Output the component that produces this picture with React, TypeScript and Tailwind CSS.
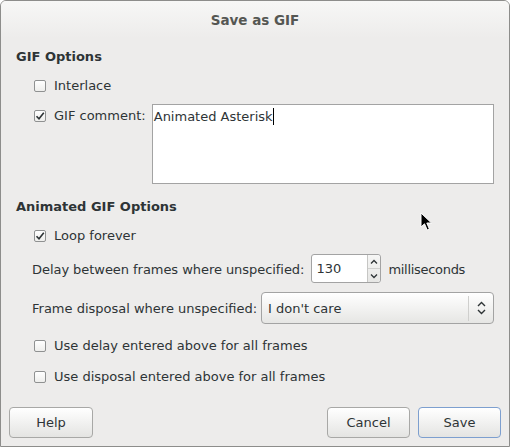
import React from 'react'

function Check({ on }: { on?: boolean }) {
  return (
    <span className="w-[12px] h-[12px] shrink-0 border border-[#8f9191] rounded-[2px] bg-gradient-to-b from-white to-[#eeeeec] flex items-center justify-center">
      {on && (
        <svg width="10" height="10" viewBox="0 0 10 10">
          <path d="M1.5 5.2 L4 7.8 L8.8 1.8" fill="none" stroke="#2e3436" strokeWidth="1.6" />
        </svg>
      )}
    </span>
  )
}

function CheckRow({ label, on, className }: { label: string; on?: boolean; className?: string }) {
  return (
    <div className={`flex items-center gap-[8px] pl-[18px] h-[16px] whitespace-nowrap ${className ?? ''}`}>
      <Check on={on} />
      <span>{label}</span>
    </div>
  )
}

function Button({ label, focus, className }: { label: string; focus?: boolean; className?: string }) {
  return (
    <button
      className={`h-[31px] rounded-[4px] border bg-gradient-to-b from-white to-[#e4e4e2] flex items-center justify-center ${
        focus ? 'border-[#7d9fcf]' : 'border-[#a8a8a6]'
      } ${className ?? ''}`}
    >
      {label}
    </button>
  )
}

export default function App() {
  return (
    <div className="relative w-[510px] h-[447px] bg-[#edeceb] border border-[#8d8d8b] rounded-t-[6px] overflow-hidden flex flex-col font-['DejaVu_Sans',sans-serif] text-[13px] leading-[16px] text-[#2e3436]">
      {/* Title bar */}
      <div className="h-[37px] shrink-0 flex items-center justify-center bg-gradient-to-b from-[#f7f7f6] to-[#edeceb]">
        <span className="font-bold text-[#555753] text-[13.5px]">Save as GIF</span>
      </div>

      <div className="flex flex-col px-[15px]">
        {/* GIF options */}
        <div className="mt-[11px] font-bold">GIF Options</div>
        <CheckRow label="Interlace" className="mt-[13px]" />

        <div className="mt-[10px] flex items-start">
          <div className="flex items-center gap-[8px] pl-[18px] h-[16px] mt-[4px] w-[136px] whitespace-nowrap">
            <Check on />
            <span>GIF comment:</span>
          </div>
          <div className="w-[343px] h-[80px] bg-white border border-[#a3a3a3] px-[1px] pt-[3px]">
            <span>Animated Asterisk</span>
            <span className="inline-block w-[1px] h-[17px] bg-black align-[-4px]" />
          </div>
        </div>

        {/* Animated GIF options */}
        <div className="mt-[15px] font-bold">Animated GIF Options</div>
        <CheckRow label="Loop forever" on className="mt-[13px]" />

        <div className="mt-[10px] flex items-center pl-[16px] whitespace-nowrap">
          <span className="mt-[2px] tracking-[-0.05px]">Delay between frames where unspecified:</span>
          <div className="ml-[7px] shrink-0 w-[70px] h-[29px] bg-white border border-[#a3a3a3] rounded-[3px] flex">
            <div className="flex-1 flex items-center pl-[4px] pt-[1px]">130</div>
            <div className="w-[13px] border-l border-[#c6c6c4] bg-gradient-to-b from-[#f6f6f5] to-[#e6e6e4] rounded-r-[3px] flex flex-col">
              <div className="flex-1 flex items-center justify-center border-b border-[#d0d0ce]">
                <svg width="8" height="6" viewBox="0 0 8 6">
                  <path d="M1 4.5 L4 1.5 L7 4.5" fill="none" stroke="#2e3436" strokeWidth="1.3" />
                </svg>
              </div>
              <div className="flex-1 flex items-center justify-center">
                <svg width="8" height="6" viewBox="0 0 8 6">
                  <path d="M1 1.5 L4 4.5 L7 1.5" fill="none" stroke="#2e3436" strokeWidth="1.3" />
                </svg>
              </div>
            </div>
          </div>
          <span className="ml-[7px] mt-[2px] tracking-[-0.3px]">milliseconds</span>
        </div>

        <div className="mt-[9px] flex items-center pl-[16px] whitespace-nowrap">
          <span className="mt-[2px]">Frame disposal where unspecified:</span>
          <div className="ml-auto shrink-0 w-[233px] h-[32px] border border-[#a3a3a3] rounded-[4px] bg-gradient-to-b from-white to-[#e6e6e4] flex items-center">
            <span className="flex-1 pl-[6px] mt-[2px]">I don't care</span>
            <span className="w-[1px] h-[25px] bg-[#cfcfcd]" />
            <span className="w-[24px] flex items-center justify-center">
              <svg width="9" height="14" viewBox="0 0 9 14">
                <path d="M1 5 L4.5 1.5 L8 5 M1 9 L4.5 12.5 L8 9" fill="none" stroke="#2e3436" strokeWidth="1.4" />
              </svg>
            </span>
          </div>
        </div>

        <CheckRow label="Use delay entered above for all frames" className="mt-[14px]" />
        <CheckRow label="Use disposal entered above for all frames" className="mt-[15px]" />
      </div>

      {/* Buttons */}
      <div className="mt-[22px] flex items-center px-[8px]">
        <Button label="Help" className="w-[84px]" />
        <div className="flex-1" />
        <Button label="Cancel" className="w-[83px]" />
        <Button label="Save" focus className="w-[83px] ml-[8px]" />
      </div>

      {/* Mouse pointer */}
      <svg className="absolute left-[419px] top-[211px]" width="14" height="20" viewBox="0 0 14 20">
        <path d="M1 1 L1 15 L4.5 11.8 L7.2 18 L9.4 17 L6.8 11 L11.5 11 Z" fill="#000" stroke="#fff" strokeWidth="1" strokeLinejoin="round" />
      </svg>
    </div>
  )
}
